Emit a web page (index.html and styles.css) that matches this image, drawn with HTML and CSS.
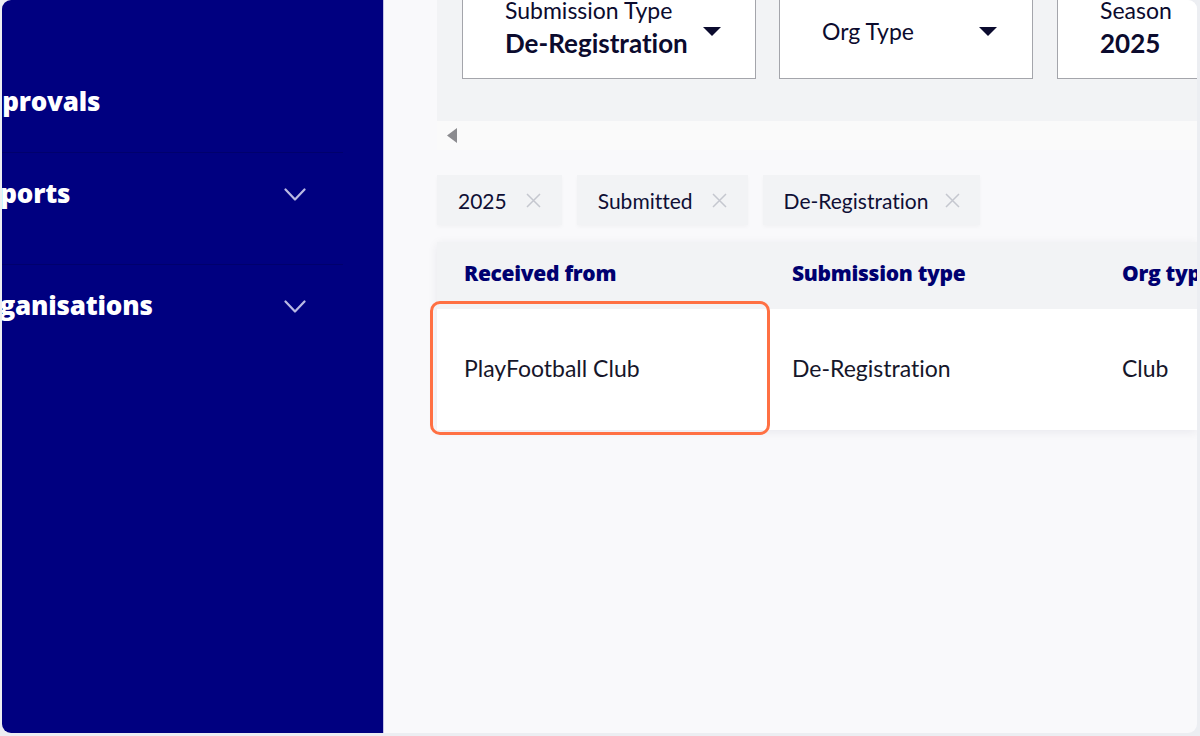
FILE: index.html
```html
<!DOCTYPE html>
<html lang="en">
<head>
<meta charset="utf-8">
<title>Submissions</title>
<link rel="stylesheet" href="styles.css">
</head>
<body>
<div class="screen">
  <nav class="sidebar">
    <div class="nav-item first"><span class="nav-label">Approvals</span></div>
    <div class="nav-item"><span class="nav-label">Reports</span>
      <svg class="chev" width="22" height="13" viewBox="0 0 22 13"><path d="M1.5 1.5 L11 11.5 L20.5 1.5" fill="none" stroke="#b9b9e3" stroke-width="2.2" stroke-linecap="round" stroke-linejoin="round"/></svg>
    </div>
    <div class="nav-item last"><span class="nav-label">Organisations</span>
      <svg class="chev" width="22" height="13" viewBox="0 0 22 13"><path d="M1.5 1.5 L11 11.5 L20.5 1.5" fill="none" stroke="#b9b9e3" stroke-width="2.2" stroke-linecap="round" stroke-linejoin="round"/></svg>
    </div>
  </nav>
  <main class="main">
    <section class="filters">
      <div class="fbox fbox-type">
        <div class="ftext">
          <div class="flabel">Submission Type</div>
          <div class="fvalue">De-Registration</div>
        </div>
        <svg class="caret" width="18" height="9" viewBox="0 0 18 9"><path d="M0 0 H18 L9 9 Z" fill="#0b0b2e"/></svg>
      </div>
      <div class="fbox fbox-org">
        <div class="ftext">
          <div class="fplaceholder">Org Type</div>
        </div>
        <svg class="caret" width="18" height="9" viewBox="0 0 18 9"><path d="M0 0 H18 L9 9 Z" fill="#0b0b2e"/></svg>
      </div>
      <div class="fbox fbox-season">
        <div class="ftext">
          <div class="flabel">Season</div>
          <div class="fvalue">2025</div>
        </div>
      </div>
    </section>
    <div class="scrollstrip">
      <svg width="11" height="15" viewBox="0 0 11 15"><path d="M10 0 V15 L0 7.5 Z" fill="#8b8b8f"/></svg>
    </div>
    <div class="chips">
      <div class="chip"><span>2025</span><svg class="x" width="15" height="15" viewBox="0 0 15 15"><path d="M1 1 L14 14 M14 1 L1 14" stroke="#c5c7cf" stroke-width="1.5"/></svg></div>
      <div class="chip"><span>Submitted</span><svg class="x" width="15" height="15" viewBox="0 0 15 15"><path d="M1 1 L14 14 M14 1 L1 14" stroke="#c5c7cf" stroke-width="1.5"/></svg></div>
      <div class="chip"><span>De-Registration</span><svg class="x" width="15" height="15" viewBox="0 0 15 15"><path d="M1 1 L14 14 M14 1 L1 14" stroke="#c5c7cf" stroke-width="1.5"/></svg></div>
    </div>
    <div class="table">
      <div class="thead">
        <div class="cell">Received from</div>
        <div class="cell">Submission type</div>
        <div class="cell">Org type</div>
      </div>
      <div class="trow">
        <div class="cell">PlayFootball Club</div>
        <div class="cell">De-Registration</div>
        <div class="cell">Club</div>
        <div class="highlight"></div>
      </div>
    </div>
  </main>
</div>
</body>
</html>
```
FILE: styles.css
```css
* { box-sizing: border-box; }
html, body { margin: 0; padding: 0; }
body {
  background: #eceef2;
  width: 1200px;
  height: 736px;
  overflow: hidden;
  font-family: Lato, "Liberation Sans", sans-serif;
  font-variant-ligatures: none;
}
.screen {
  margin-left: 2px;
  width: 1195px;
  height: 733px;
  border-radius: 9px;
  overflow: hidden;
  display: flex;
  background: #f9f9fb;
}
.sidebar {
  width: 382px;
  flex-shrink: 0;
  background: #000080;
  border-right: 1px solid #c4c4e6;
  overflow: hidden;
}
.nav-item {
  height: 112px;
  padding-top: 24px;
  padding-right: 37px;
  margin-right: 40px;
  display: flex;
  align-items: flex-start;
  justify-content: space-between;
  border-bottom: 1px solid #00006c;
}
.nav-item.first {
  height: 153px;
  padding-top: 85px;
}
.nav-item.last { border-bottom: none; }
.nav-label {
  margin-left: -35px;
  color: #ffffff;
  font-family: "Open Sans", Lato, sans-serif;
  font-weight: 800;
  font-size: 26px;
  line-height: 32px;
  letter-spacing: -0.2px;
}
.chev { margin-top: 11px; }
.main {
  flex: 1;
  min-width: 0;
  padding-left: 53px;
  overflow: hidden;
}
.filters {
  height: 121px;
  background: #f2f3f5;
  padding-left: 25px;
  display: flex;
  gap: 23px;
  overflow: hidden;
}
.fbox {
  margin-top: -3px;
  height: 82px;
  flex-shrink: 0;
  background: #ffffff;
  border: 1px solid #a4a5ab;
  display: flex;
  align-items: flex-start;
  color: #0b0b2e;
}
.fbox-type { width: 294px; padding-left: 42px; }
.fbox-org { width: 254px; padding-left: 42px; }
.fbox-season { width: 200px; padding-left: 42px; margin-left: 1px; }
.ftext { flex: 1; }
.flabel {
  font-size: 23px;
  line-height: 24px;
}
.fvalue {
  margin-top: 7px;
  font-size: 26px;
  line-height: 28px;
  font-weight: 700;
}
.fplaceholder {
  font-size: 23px;
  line-height: 26px;
  margin-top: 20px;
}
.caret { margin-top: 29px; margin-right: 34px; }
.fbox-org .caret { margin-right: 35px; }
.scrollstrip {
  height: 29px;
  background: #fafafa;
  padding-left: 10px;
  padding-top: 7px;
}
.scrollstrip svg { display: block; }
.chips {
  margin-top: 25px;
  display: flex;
  gap: 15px;
}
.chip {
  height: 50px;
  background: #f2f3f5;
  padding: 0 21px;
  display: flex;
  align-items: center;
  gap: 19px;
  color: #0f0f35;
  font-size: 21px;
  box-shadow: 0 2px 4px rgba(0,0,0,0.03);
}
.chip:last-child { gap: 17px; padding-right: 20px; }
.chip .x { display: block; }
.table {
  margin-top: 17px;
  background: #ffffff;
  box-shadow: 0 2px 10px rgba(20,20,60,0.07);
}
.thead, .trow {
  display: grid;
  grid-template-columns: 328px 330px 1fr;
  align-items: center;
}
.thead {
  height: 67px;
  background: #f2f3f5;
  color: #000070;
  font-family: "Open Sans", Lato, sans-serif;
  font-weight: 800;
  font-size: 21px;
  letter-spacing: -0.3px;
  padding-bottom: 6px;
}
.trow {
  position: relative;
  height: 121px;
  background: #ffffff;
  color: #16162a;
  font-size: 23px;
  padding-bottom: 4px;
}
.cell {
  padding-left: 27px;
  white-space: nowrap;
}
.highlight {
  position: absolute;
  left: -7px;
  top: -8px;
  width: 340px;
  height: 134px;
  border: 3.5px solid #ff7043;
  border-radius: 10px;
  pointer-events: none;
}
```
